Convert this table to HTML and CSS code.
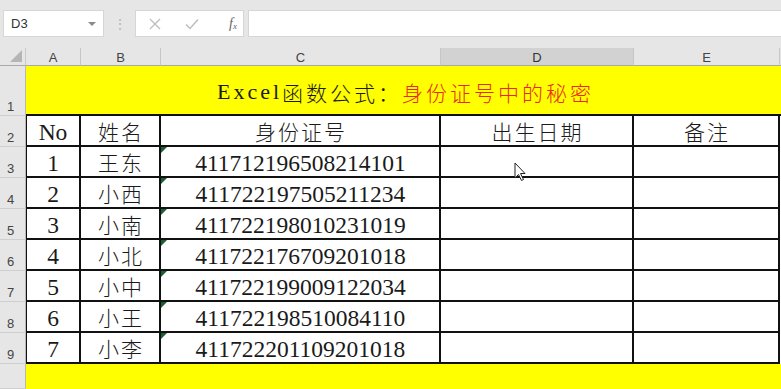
FILE: index.html
```html
<!DOCTYPE html>
<html lang="zh">
<head>
<meta charset="utf-8">
<title>Excel</title>
<link rel="stylesheet" href="styles.css">
</head>
<body>
<div class="toolbar">
  <div class="namebox"><span>D3</span><span class="dd"></span></div>
  <div class="grip">⋮</div>
  <div class="fbtns">
    <svg class="ic" width="12" height="12" viewBox="0 0 12 12"><path d="M1 1L11 11M11 1L1 11" stroke="#bdbdbd" stroke-width="1.3" fill="none"/></svg>
    <svg class="ic" width="14" height="12" viewBox="0 0 14 12"><path d="M1 6.5L5 10.5L13 1.5" stroke="#bdbdbd" stroke-width="1.5" fill="none"/></svg>
    <span class="fx"><i>f</i><sub>x</sub></span>
  </div>
  <div class="finput"></div>
</div>
<div class="sheet">
  <div class="corner"><span class="tri"></span></div>
  <div class="ch">A</div>
  <div class="ch">B</div>
  <div class="ch">C</div>
  <div class="ch sel">D</div>
  <div class="ch">E</div>
  <div class="ch last"></div>

  <div class="rh">1</div>
  <div class="title"><span class="t0">Excel</span><span class="t1">函数公式：</span><span class="t2">身份证号中的秘密</span></div>

  <div class="rh">2</div>
  <div class="cell num">No</div>
  <div class="cell cn">姓名</div>
  <div class="cell cn">身份证号</div>
  <div class="cell cn">出生日期</div>
  <div class="cell cn">备注</div>
  <div class="fill"></div>

  <div class="rh">3</div>
  <div class="cell num">1</div>
  <div class="cell cn">王东</div>
  <div class="cell num id">411712196508214101</div>
  <div class="cell"></div>
  <div class="cell"></div>
  <div class="fill"></div>

  <div class="rh">4</div>
  <div class="cell num">2</div>
  <div class="cell cn">小西</div>
  <div class="cell num id">411722197505211234</div>
  <div class="cell"></div>
  <div class="cell"></div>
  <div class="fill"></div>

  <div class="rh">5</div>
  <div class="cell num">3</div>
  <div class="cell cn">小南</div>
  <div class="cell num id">411722198010231019</div>
  <div class="cell"></div>
  <div class="cell"></div>
  <div class="fill"></div>

  <div class="rh">6</div>
  <div class="cell num">4</div>
  <div class="cell cn">小北</div>
  <div class="cell num id">411722176709201018</div>
  <div class="cell"></div>
  <div class="cell"></div>
  <div class="fill"></div>

  <div class="rh">7</div>
  <div class="cell num">5</div>
  <div class="cell cn">小中</div>
  <div class="cell num id">411722199009122034</div>
  <div class="cell"></div>
  <div class="cell"></div>
  <div class="fill"></div>

  <div class="rh">8</div>
  <div class="cell num">6</div>
  <div class="cell cn">小王</div>
  <div class="cell num id">411722198510084110</div>
  <div class="cell"></div>
  <div class="cell"></div>
  <div class="fill"></div>

  <div class="rh">9</div>
  <div class="cell num">7</div>
  <div class="cell cn">小李</div>
  <div class="cell num id">411722201109201018</div>
  <div class="cell"></div>
  <div class="cell"></div>
  <div class="fill"></div>

  <div class="rh"></div>
  <div class="yellow"></div>

  <svg class="cursor" width="13" height="20" viewBox="0 0 13 20"><path d="M1 1L1 16L4.5 12.5L7.5 18.5L9.5 17.5L6.5 11.5L11 11.5Z" fill="#fff" stroke="#222" stroke-width="1" stroke-linejoin="round"/></svg>
</div>
</body>
</html>
```
FILE: styles.css
```css
* { box-sizing: border-box; }
html, body { margin: 0; padding: 0; }
body {
  width: 781px;
  height: 389px;
  overflow: hidden;
  background: #fff;
  font-family: "Liberation Sans", Arial, sans-serif;
}
.toolbar {
  height: 48px;
  background: #e6e6e6;
  display: flex;
  align-items: flex-start;
  padding-top: 10px;
}
.namebox {
  margin-left: 3px;
  width: 101px;
  height: 27px;
  background: #fff;
  border: 1px solid #d6d6d6;
  display: flex;
  align-items: center;
  justify-content: space-between;
  padding: 0 7px 0 7px;
  font-size: 13px;
  color: #333;
}
.dd {
  width: 0; height: 0;
  border-left: 4px solid transparent;
  border-right: 4px solid transparent;
  border-top: 4px solid #8a8a8a;
}
.grip {
  width: 31px;
  height: 27px;
  display: flex;
  align-items: center;
  justify-content: center;
  color: #b8b8b8;
  font-size: 14px;
}
.fbtns {
  width: 109px;
  height: 27px;
  background: #fff;
  border: 1px solid #d6d6d6;
  display: flex;
  align-items: center;
  padding-left: 13px;
  gap: 24px;
}
.fx {
  font-family: "Liberation Serif", serif;
  color: #666;
  font-size: 14px;
  margin-left: 6px;
}
.fx sub { font-size: 9px; font-style: italic; vertical-align: -1px; }
.finput {
  margin-left: 4px;
  flex: 1;
  height: 27px;
  background: #fff;
  border: 1px solid #d6d6d6;
  border-right: none;
}
.sheet {
  position: relative;
  display: grid;
  grid-template-columns: 26px 55px 80px 280px 193px 146px 1px;
  grid-template-rows: 18px 50px repeat(8, 31px) 25px;
  background: #fff;
}
.corner {
  background: #e6e6e6;
  border-right: 1px solid #c8c8c8;
  border-bottom: 1px solid #a8a8a8;
  position: relative;
}
.tri {
  position: absolute;
  right: 3px;
  bottom: 3px;
  width: 0; height: 0;
  border-left: 12px solid transparent;
  border-bottom: 12px solid #b5b5b5;
}
.ch {
  background: #e6e6e6;
  border-right: 1px solid #c6c6c6;
  border-bottom: 1px solid #a8a8a8;
  font-size: 13px;
  color: #444;
  display: flex;
  align-items: center;
  justify-content: center;
  padding-top: 1px;
}
.ch.sel { background: #d2d2d2; color: #333; }
.ch.last { border-right: none; }
.rh {
  grid-column: 1;
  background: #e6e6e6;
  border-right: 1px solid #b8b8b8;
  border-bottom: 1px solid #cfcfcf;
  font-size: 13px;
  color: #444;
  display: flex;
  align-items: flex-end;
  padding-left: 7px;
  padding-bottom: 1px;
}
.title {
  grid-column: 2 / 8;
  background: #ffff00;
  border-bottom: 2px solid #111;
  display: flex;
  justify-content: center;
  align-items: center;
  padding-top: 4px;
  padding-left: 4px;
  font-family: "Noto Sans CJK SC", sans-serif;
  font-weight: 300;
  font-size: 21px;
  letter-spacing: 3px;
  color: #1a1a1a;
}
.t0 {
  font-family: "Liberation Serif", serif;
  font-weight: 400;
  font-size: 22px;
  letter-spacing: 3px;
}
.t2 { color: #e8281c; }
.cell {
  position: relative;
  border-right: 2px solid #111;
  border-bottom: 2px solid #111;
  display: flex;
  justify-content: center;
  color: #1a1a1a;
}
.rh + .cell { border-left: 1px solid #111; }
.num {
  font-family: "Liberation Serif", "Noto Sans CJK SC", serif;
  font-size: 23.5px;
  line-height: 25px;
  padding-top: 4px;
}
.cn {
  font-family: "Noto Sans CJK SC", sans-serif;
  font-weight: 300;
  font-size: 21px;
  letter-spacing: 2px;
  line-height: 25px;
  padding-top: 3px;
  padding-left: 2px;
}
.id { letter-spacing: 0; padding-left: 1px; }
.id::before {
  content: "";
  position: absolute;
  left: 0;
  top: 0;
  width: 0; height: 0;
  border-top: 6px solid #1d5e33;
  border-right: 6px solid transparent;
}
.fill { background: #fff; }
.yellow {
  grid-column: 2 / 8;
  background: #ffff00;
}
.cursor {
  position: absolute;
  left: 514px;
  top: 114px;
}
```
